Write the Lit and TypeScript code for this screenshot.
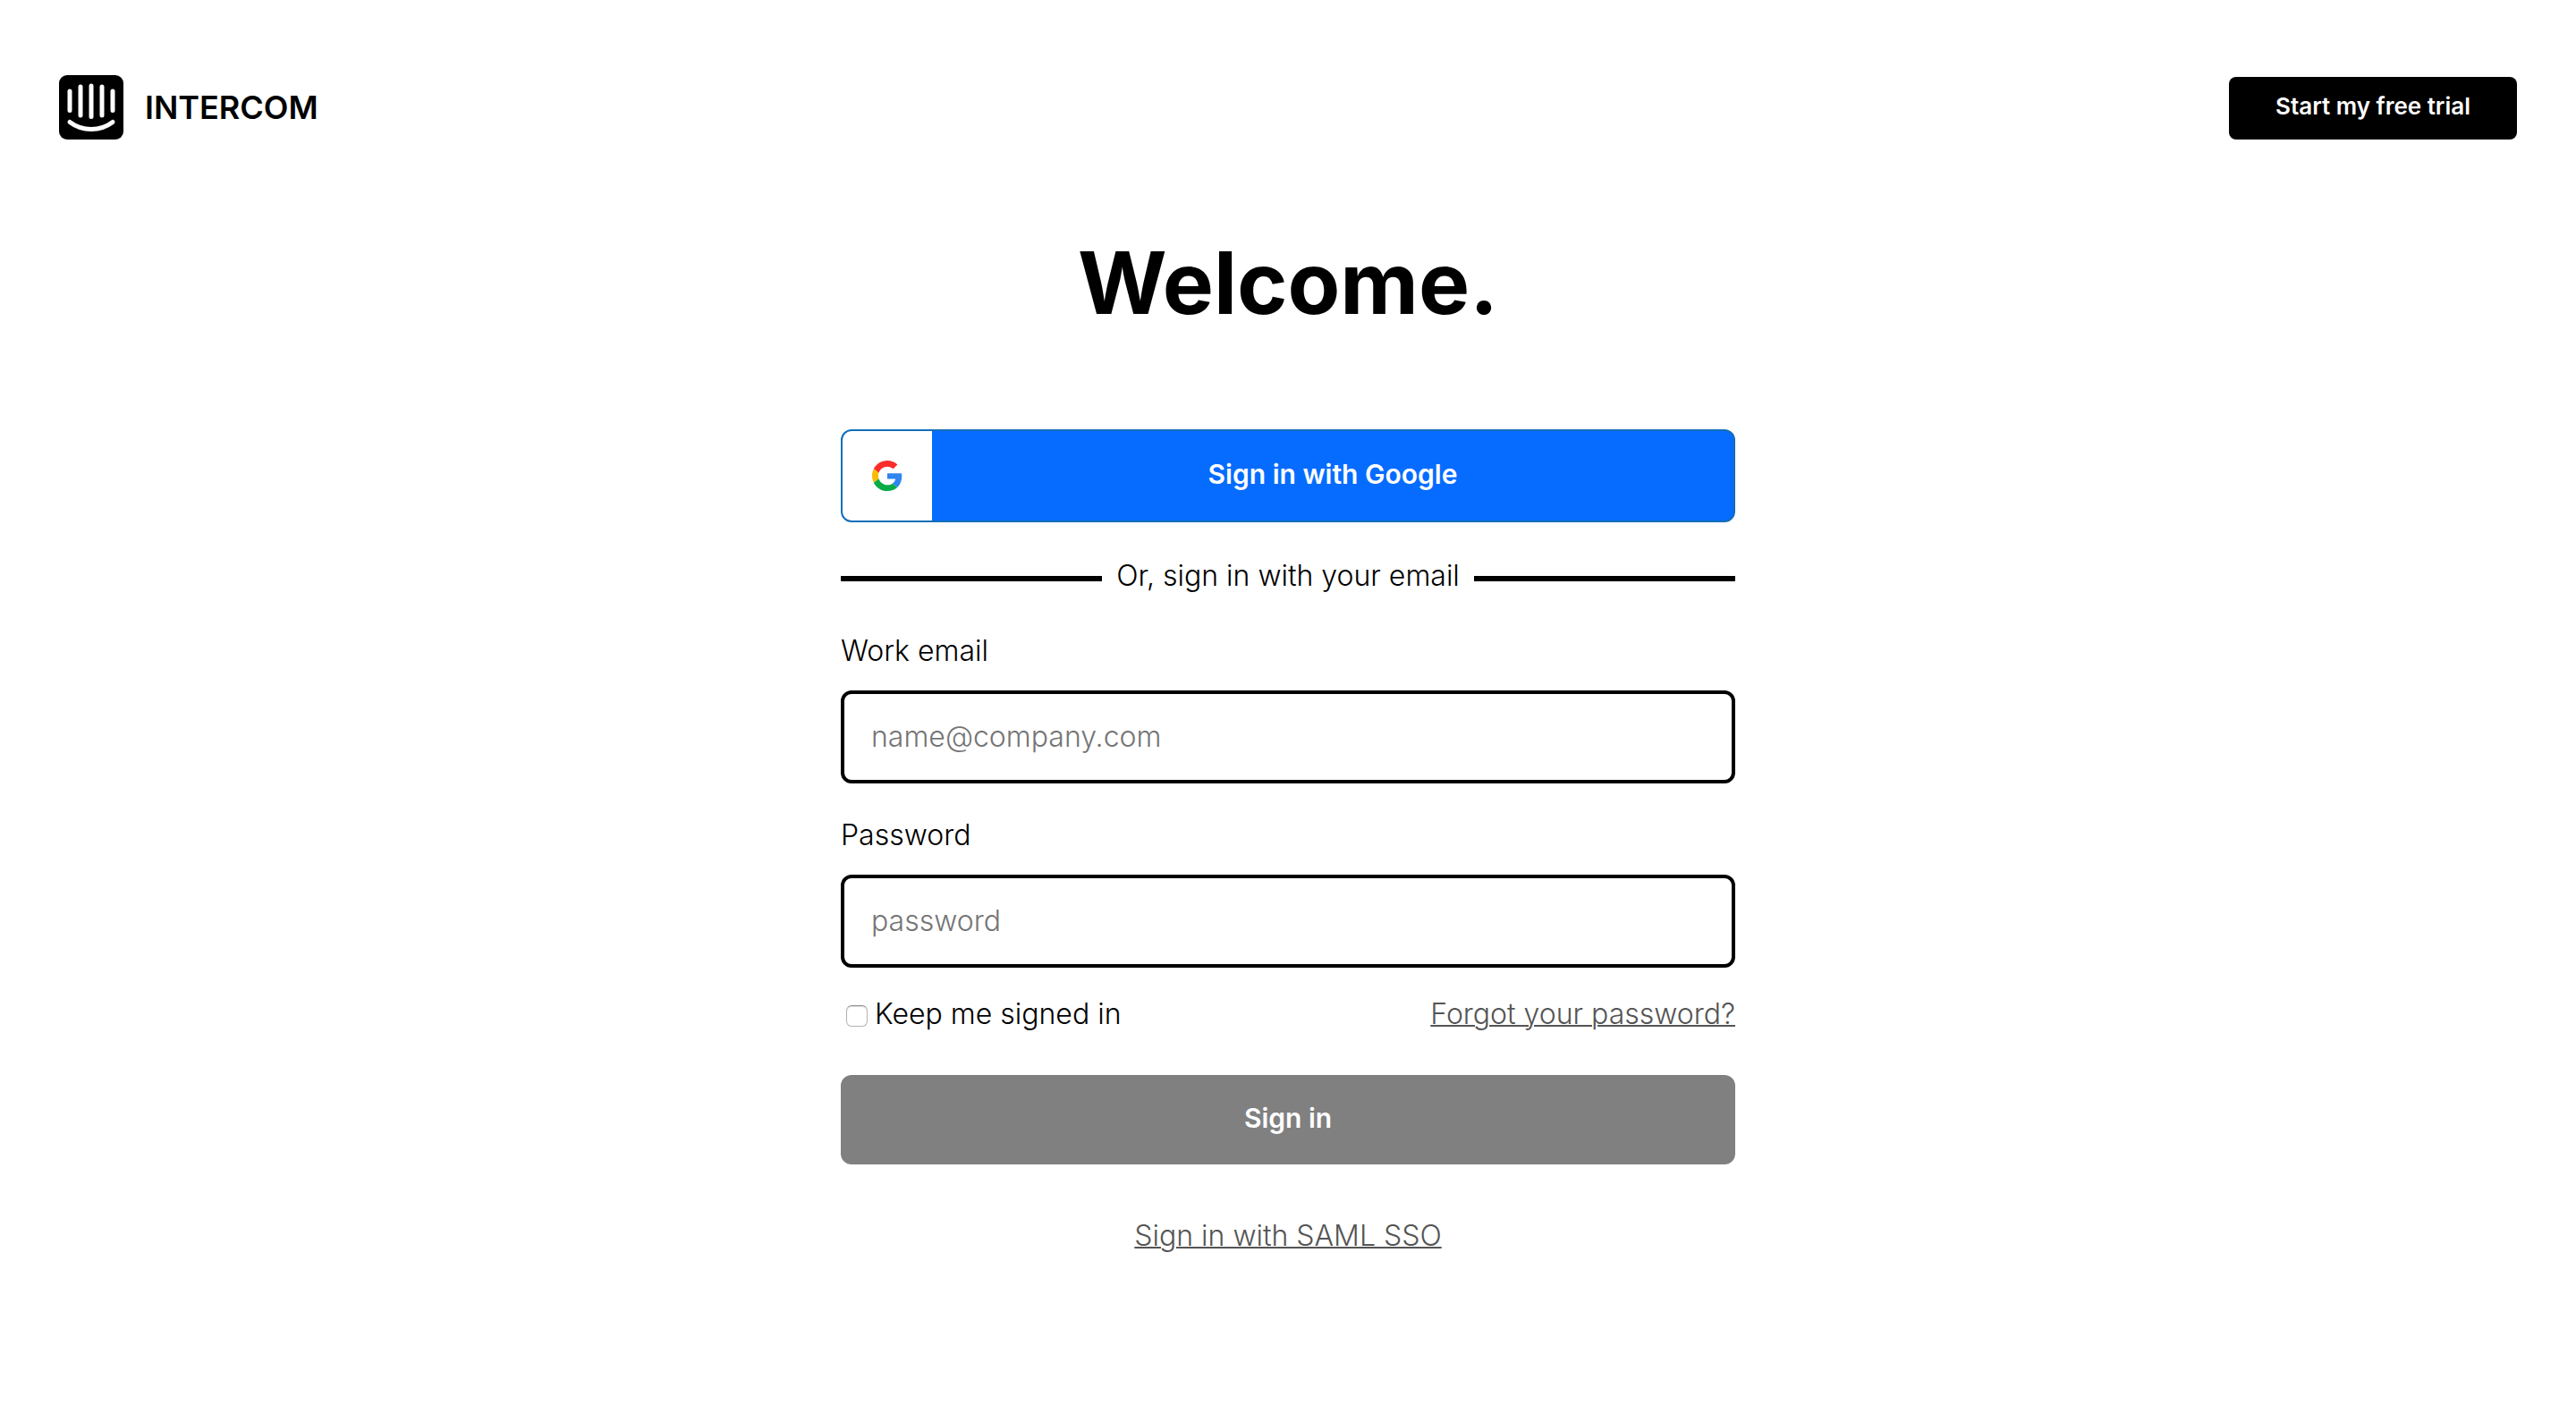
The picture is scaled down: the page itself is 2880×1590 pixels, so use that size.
import { LitElement, html, css } from "lit";
import { customElement } from "lit/decorators.js";

@customElement("app-logo")
class AppLogo extends LitElement {
  static styles = css`
    :host {
      display: block;
    }
    .logo {
      display: flex;
      align-items: center;
      gap: 24px;
      color: #000;
      text-decoration: none;
    }
    .mark {
      display: block;
      width: 72px;
      height: 72px;
    }
    .word {
      font-size: 36px;
      line-height: 40px;
      font-weight: 600;
    }
  `;

  render() {
    return html`
      <a class="logo" href="#">
        <svg class="mark" viewBox="0 0 72 72" aria-hidden="true">
          <rect width="72" height="72" rx="9" fill="#000" />
          <g fill="none" stroke="#fff" stroke-width="5" stroke-linecap="round">
            <path d="M12 18v21.500M24 13v32M36 12v34.500M48 13v32M60 18v21.500" />
            <path d="M12 52.500C26 63.200 46 63.200 60 52.500" />
          </g>
        </svg>
        <span class="word">INTERCOM</span>
      </a>
    `;
  }
}

@customElement("google-button")
class GoogleButton extends LitElement {
  static styles = css`
    :host {
      display: block;
    }
    .button {
      box-sizing: border-box;
      display: flex;
      align-items: stretch;
      width: 100%;
      height: 104px;
      padding: 0;
      overflow: hidden;
      border: 2px solid #146eb8;
      border-radius: 12px;
      background: #056cff;
      color: #fff;
      font: inherit;
      cursor: pointer;
    }
    .badge {
      display: flex;
      align-items: center;
      justify-content: center;
      width: 100px;
      background: #fff;
    }
    .icon {
      display: block;
      width: 34px;
      height: 34px;
    }
    .text {
      flex: 1;
      align-self: center;
      padding-bottom: 4px;
      font-size: 30px;
      line-height: 40px;
      font-weight: 600;
    }
  `;

  render() {
    return html`
      <button class="button" type="button">
        <span class="badge">
          <svg class="icon" viewBox="0 0 48 48" aria-hidden="true">
            <path fill="#fa2d2a" d="M24 9.500c3.540 0 6.710 1.220 9.210 3.600l6.850-6.850C35.900 2.380 30.470 0 24 0 14.620 0 6.510 5.380 2.560 13.220l7.980 6.190C12.430 13.720 17.740 9.500 24 9.500z" />
            <path fill="#3086ee" d="M46.980 24.550c0-1.570-.15-3.090-.38-4.550H24v9.020h12.940c-.58 2.960-2.260 5.480-4.780 7.180l7.730 6c4.510-4.180 7.090-10.360 7.090-17.650z" />
            <path fill="#fbbc05" d="M10.530 28.590c-.48-1.450-.76-2.990-.76-4.590s.27-3.140.76-4.590l-7.980-6.190C.920 16.460 0 20.120 0 24c0 3.880.920 7.540 2.560 10.780l7.970-6.190z" />
            <path fill="#08ab48" d="M24 48c6.480 0 11.930-2.130 15.890-5.810l-7.730-6c-2.150 1.450-4.920 2.300-8.160 2.300-6.260 0-11.570-4.220-13.470-9.910l-7.980 6.190C6.510 42.620 14.620 48 24 48z" />
          </svg>
        </span>
        <span class="text">Sign in with Google</span>
      </button>
    `;
  }
}

@customElement("app-root")
class AppRoot extends LitElement {
  static styles = css`
    :host {
      display: block;
      min-height: 100vh;
      background: #fff;
      color: #000;
      font-family: Inter, "Liberation Sans", sans-serif;
      font-size: 32px;
      line-height: 40px;
      font-weight: 300;
    }
    .header {
      display: flex;
      align-items: flex-end;
      justify-content: space-between;
      padding: 84px 66px 0;
    }
    .trial {
      box-sizing: border-box;
      height: 70px;
      padding: 0 52px 4px;
      border: 0;
      border-radius: 8px;
      background: #000;
      color: #fff;
      font: inherit;
      font-size: 26px;
      font-weight: 600;
      cursor: pointer;
    }
    .main {
      box-sizing: border-box;
      width: 100%;
      max-width: 1000px;
      margin: 0 auto;
      padding: 108px 0 64px;
    }
    .title {
      margin: 0 0 112px;
      font-size: 96px;
      line-height: 104px;
      font-weight: 700;
      text-align: center;
    }
    .divider {
      display: flex;
      align-items: center;
      gap: 16px;
      margin: 40px 0 44px;
    }
    .divider::before,
    .divider::after {
      content: "";
      flex: 1;
      height: 6px;
      margin-top: 6px;
      background: #000;
    }
    .field {
      display: flex;
      flex-direction: column;
      gap: 24px;
    }
    .field + .field {
      margin-top: 38px;
    }
    .input {
      box-sizing: border-box;
      width: 100%;
      height: 104px;
      padding: 0 30px 2px;
      border: 4px solid #000;
      border-radius: 12px;
      background: #fff;
      color: #000;
      font: inherit;
    }
    .input::placeholder {
      color: #757575;
      opacity: 1;
    }
    .options {
      display: flex;
      align-items: center;
      justify-content: space-between;
      margin: 32px 0 48px;
    }
    .keep {
      display: flex;
      align-items: center;
      gap: 8px;
    }
    .check {
      appearance: none;
      box-sizing: border-box;
      width: 24px;
      height: 24px;
      margin: 4px 0 0 6px;
      border: 1px solid #b4b4b4;
      border-top-color: #8c8c8c;
      border-radius: 6px;
      background: #fff;
      box-shadow: inset 0 1px 1px #ddd;
    }
    .check:checked {
      background: #056cff;
    }
    .link {
      color: #555;
      text-decoration: underline;
      text-decoration-thickness: 2px;
    }
    .submit {
      display: block;
      box-sizing: border-box;
      width: 100%;
      height: 100px;
      padding: 0 0 4px;
      border: 0;
      border-radius: 12px;
      background: #808080;
      color: #fff;
      font: inherit;
      font-size: 30px;
      font-weight: 600;
      cursor: pointer;
    }
    .sso {
      margin: 60px 0 0;
      text-align: center;
    }
  `;

  private submit(event: Event) {
    event.preventDefault();
  }

  render() {
    return html`
      <header class="header">
        <app-logo></app-logo>
        <button class="trial" type="button">Start my free trial</button>
      </header>
      <main class="main">
        <h1 class="title">Welcome.</h1>
        <google-button></google-button>
        <div class="divider">Or, sign in with your email</div>
        <form @submit=${this.submit}>
          <div class="field">
            <label for="email">Work email</label>
            <input class="input" id="email" type="email" placeholder="name@company.com" />
          </div>
          <div class="field">
            <label for="password">Password</label>
            <input class="input" id="password" type="password" placeholder="password" />
          </div>
          <div class="options">
            <div class="keep">
              <input class="check" id="keep" type="checkbox" />
              <label for="keep">Keep me signed in</label>
            </div>
            <a class="link" href="#">Forgot your password?</a>
          </div>
          <button class="submit" type="submit">Sign in</button>
        </form>
        <p class="sso"><a class="link" href="#">Sign in with SAML SSO</a></p>
      </main>
    `;
  }
}
